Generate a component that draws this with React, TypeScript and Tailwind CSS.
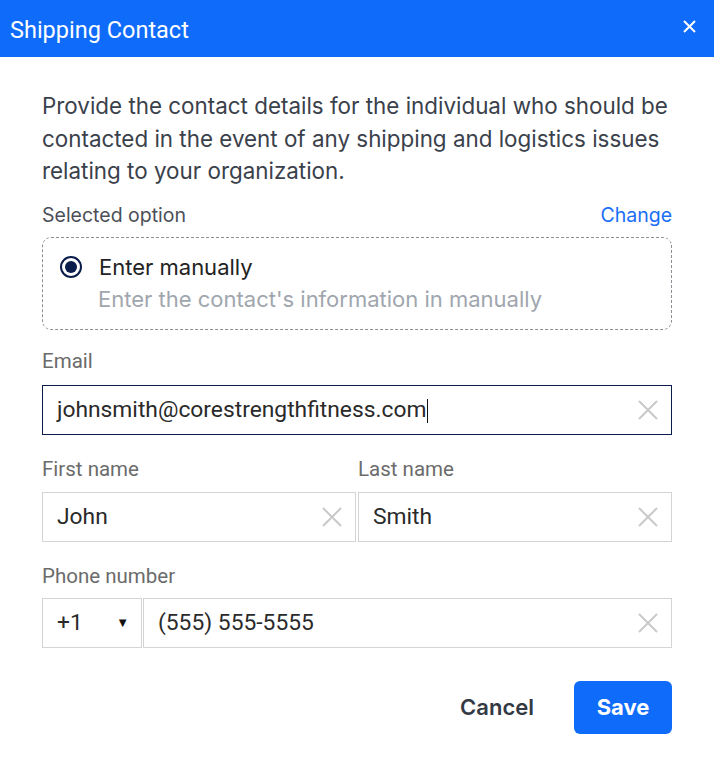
import { useState } from "react";

const inter = { fontFamily: "Inter, 'Noto Sans', sans-serif" };
const roboto = { fontFamily: "Roboto, 'Noto Sans', sans-serif" };

function ClearIcon({ size = 22, className = "" }: { size?: number; className?: string }) {
  return (
    <svg width={size} height={size} viewBox="0 0 22 22" className={className}>
      <path d="M2 2 L20 20 M20 2 L2 20" stroke="currentColor" strokeWidth="2" fill="none" />
    </svg>
  );
}

function Field({
  value,
  focused,
  className = "",
}: {
  value: string;
  focused?: boolean;
  className?: string;
}) {
  return (
    <div
      className={
        "flex items-center h-[50px] bg-white border pl-[14px] pr-[12px] " +
        (focused ? "border-[#0b1d4a] " : "border-[#d4d4d4] ") +
        className
      }
    >
      <span className="flex-1 text-[22.8px] leading-none text-[#2a2a2a] flex items-center pt-[2px]" style={roboto}>
        {value}
        {focused && <span className="inline-block w-px h-[24px] bg-[#111] ml-px" />}
      </span>
      <ClearIcon className="text-[#c9c9c9]" />
    </div>
  );
}

export default function App() {
  const [first] = useState("John");
  const [last] = useState("Smith");

  return (
    <div className="w-[714px] h-[767px] bg-white flex flex-col">
      <div className="h-[57px] bg-[#0f6cfb] flex items-center justify-between pl-[10px] pr-[18px]">
        <h1 className="text-white text-[23.5px] leading-none pt-[4px]" style={roboto}>
          Shipping Contact
        </h1>
        <svg width="13" height="13" viewBox="0 0 13 13" className="text-white -mt-[5px]">
          <path d="M1 1 L12 12 M12 1 L1 12" stroke="currentColor" strokeWidth="2" fill="none" />
        </svg>
      </div>

      <div className="flex flex-col px-[42px] pt-[33px]">
        <p className="text-[22.4px] leading-[32.5px] text-[#3a414b]" style={inter}>
          Provide the contact details for the individual who should be contacted in the event of any
          shipping and logistics issues relating to your organization.
        </p>

        <div className="flex items-end justify-between mt-[15px] leading-[24px]" style={inter}>
          <span className="text-[19.5px] text-[#4b5058]">Selected option</span>
          <span className="text-[19.5px] text-[#1a6ef5]">Change</span>
        </div>

        <div className="mt-[10px] border border-dashed border-[#8a8f96] rounded-[9px] h-[93px] flex flex-col justify-center pl-[17px]" style={inter}>
          <div className="flex items-center">
            <span className="w-[22px] h-[22px] rounded-full border-2 border-[#0b1d4a] flex items-center justify-center">
              <span className="w-[12px] h-[12px] rounded-full bg-[#0b1d4a]" />
            </span>
            <span className="ml-[17px] text-[22px] leading-[28px] text-[#222]">Enter manually</span>
          </div>
          <span className="ml-[38px] mt-[4px] text-[22px] leading-[28px] text-[#a0a6ae]">
            Enter the contact's information in manually
          </span>
        </div>

        <label className="mt-[19px] text-[20.5px] leading-[24px] text-[#6b6b6b]" style={roboto}>
          Email
        </label>
        <Field value="johnsmith@corestrengthfitness.com" focused className="mt-[12px]" />

        <div className="flex gap-[2px] mt-[22px]">
          <div className="flex-1 flex flex-col">
            <label className="text-[20.5px] leading-[24px] text-[#6b6b6b]" style={roboto}>
              First name
            </label>
            <Field value={first} className="mt-[11px]" />
          </div>
          <div className="flex-1 flex flex-col">
            <label className="text-[20.5px] leading-[24px] text-[#6b6b6b]" style={roboto}>
              Last name
            </label>
            <Field value={last} className="mt-[11px]" />
          </div>
        </div>

        <label className="mt-[22px] text-[20.5px] leading-[24px] text-[#6b6b6b]" style={roboto}>
          Phone number
        </label>
        <div className="flex gap-px mt-[10px]">
          <div className="w-[100px] h-[50px] border border-[#d4d4d4] flex items-center justify-between pl-[14px] pr-[12px]" style={roboto}>
            <span className="text-[22.8px] leading-none text-[#2a2a2a] pt-[2px]">+1</span>
            <span className="text-[13px] text-[#111]">▼</span>
          </div>
          <Field value="(555) 555-5555" className="flex-1" />
        </div>

        <div className="flex justify-end items-center mt-[33px]" style={inter}>
          <button className="text-[22px] font-semibold text-[#333a44] mr-[40px]">Cancel</button>
          <button className="w-[98px] h-[53px] rounded-[6px] bg-[#0f6cfb] text-white text-[22px] font-bold">
            Save
          </button>
        </div>
      </div>
    </div>
  );
}
